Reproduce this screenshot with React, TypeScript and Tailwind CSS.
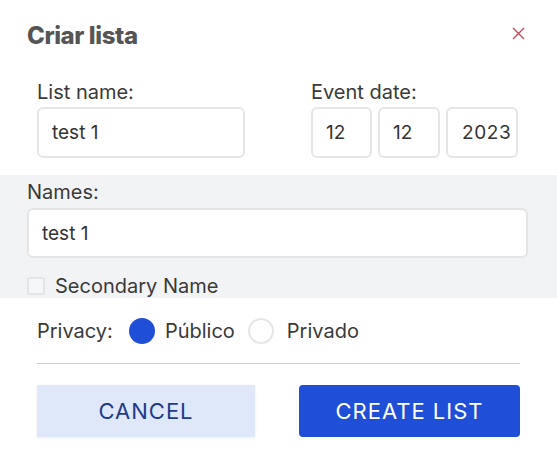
import React, { useState } from "react";

const App = () => {
  const [privacy, setPrivacy] = useState<"public" | "private">("public");
  const [secondary, setSecondary] = useState(false);

  return (
    <div className="w-[557px] h-[454px] bg-white overflow-hidden font-['Inter',sans-serif] text-[#3a3a3a]">
      {/* header */}
      <div className="flex items-start justify-between pt-[22px] pl-[27px] pr-[32px]">
        <h2 className="text-[24px] leading-[28px] font-extrabold text-[#555555] tracking-[-0.4px]">
          Criar lista
        </h2>
        <button className="mt-[5px] text-[#c9485b]">
          <svg width="13" height="13" viewBox="0 0 13 13" fill="none">
            <path d="M1 1L12 12M12 1L1 12" stroke="currentColor" strokeWidth="1.4" />
          </svg>
        </button>
      </div>

      {/* list name + date */}
      <div className="flex mt-[30px] pl-[37px]">
        <div className="w-[208px]">
          <label className="block text-[20px] leading-[24px] mb-[3px]">List name:</label>
          <input
            defaultValue="test 1"
            className="w-full h-[51px] border-2 border-[#e6e6e6] rounded-md pl-[13px] text-[19px] text-[#333] outline-none"
          />
        </div>
        <div className="ml-[66px]">
          <label className="block text-[20px] leading-[24px] mb-[3px]">Event date:</label>
          <div className="flex gap-[6px]">
            <input
              defaultValue="12"
              className="w-[61px] h-[51px] border-2 border-[#e6e6e6] rounded-md pl-[13px] text-[19px] text-[#333] outline-none"
            />
            <input
              defaultValue="12"
              className="w-[62px] h-[51px] border-2 border-[#e6e6e6] rounded-md pl-[13px] text-[19px] text-[#333] outline-none"
            />
            <input
              defaultValue="2023"
              className="w-[72px] h-[51px] border-2 border-[#e6e6e6] rounded-md pl-[14px] text-[19px] tracking-[0.6px] text-[#333] outline-none"
            />
          </div>
        </div>
      </div>

      {/* names band */}
      <div className="mt-[17px] h-[123px] bg-[#f2f3f5] overflow-hidden px-[27px] pr-[29px] pt-[5px]">
        <label className="block text-[20px] leading-[24px] mb-[4px]">Names:</label>
        <input
          defaultValue="test 1"
          className="w-full h-[50px] bg-white border-2 border-[#e4e5e7] rounded-md pl-[13px] text-[19px] text-[#333] outline-none"
        />
        <label className="flex items-center h-[24px] mt-[16px] gap-[10px] cursor-pointer">
          <span
            onClick={() => setSecondary(!secondary)}
            className={`w-[18px] h-[18px] border-2 border-[#e4e5e7] rounded-[2px] ${secondary ? "bg-[#1f4fd7]" : "bg-[#f6f7f8]"}`}
          />
          <span className="text-[20px] leading-[24px]">Secondary Name</span>
        </label>
      </div>

      {/* privacy */}
      <div className="mx-[37px]">
        <div className="flex items-center h-[28px] mt-[19px]">
          <span className="text-[20px] leading-[24px] mr-[16px]">Privacy:</span>
          <button
            onClick={() => setPrivacy("public")}
            className={`w-[26px] h-[26px] rounded-full ${privacy === "public" ? "bg-[#1f4fd7]" : "border-2 border-[#e6e6e6]"}`}
          />
          <span className="text-[20px] leading-[24px] ml-[10px]">Público</span>
          <button
            onClick={() => setPrivacy("private")}
            className={`ml-[13px] w-[26px] h-[26px] rounded-full ${privacy === "private" ? "bg-[#1f4fd7]" : "border-2 border-[#e6e6e6]"}`}
          />
          <span className="text-[20px] leading-[24px] ml-[13px]">Privado</span>
        </div>
        <div className="mt-[18px] h-px bg-[#cfcfcf] w-[483px]" />

        {/* buttons */}
        <div className="flex mt-[21px] gap-[44px]">
          <button className="w-[218px] h-[52px] bg-[#dee8f8] shadow-[0_1px_3px_rgba(0,0,0,0.08)] text-[#233a8b] text-[22px] tracking-[1px]">
            CANCEL
          </button>
          <button className="w-[221px] h-[52px] bg-[#1f4fd7] rounded-[4px] text-white text-[22px] tracking-[1px]">
            CREATE LIST
          </button>
        </div>
      </div>
    </div>
  );
};

export default App;
